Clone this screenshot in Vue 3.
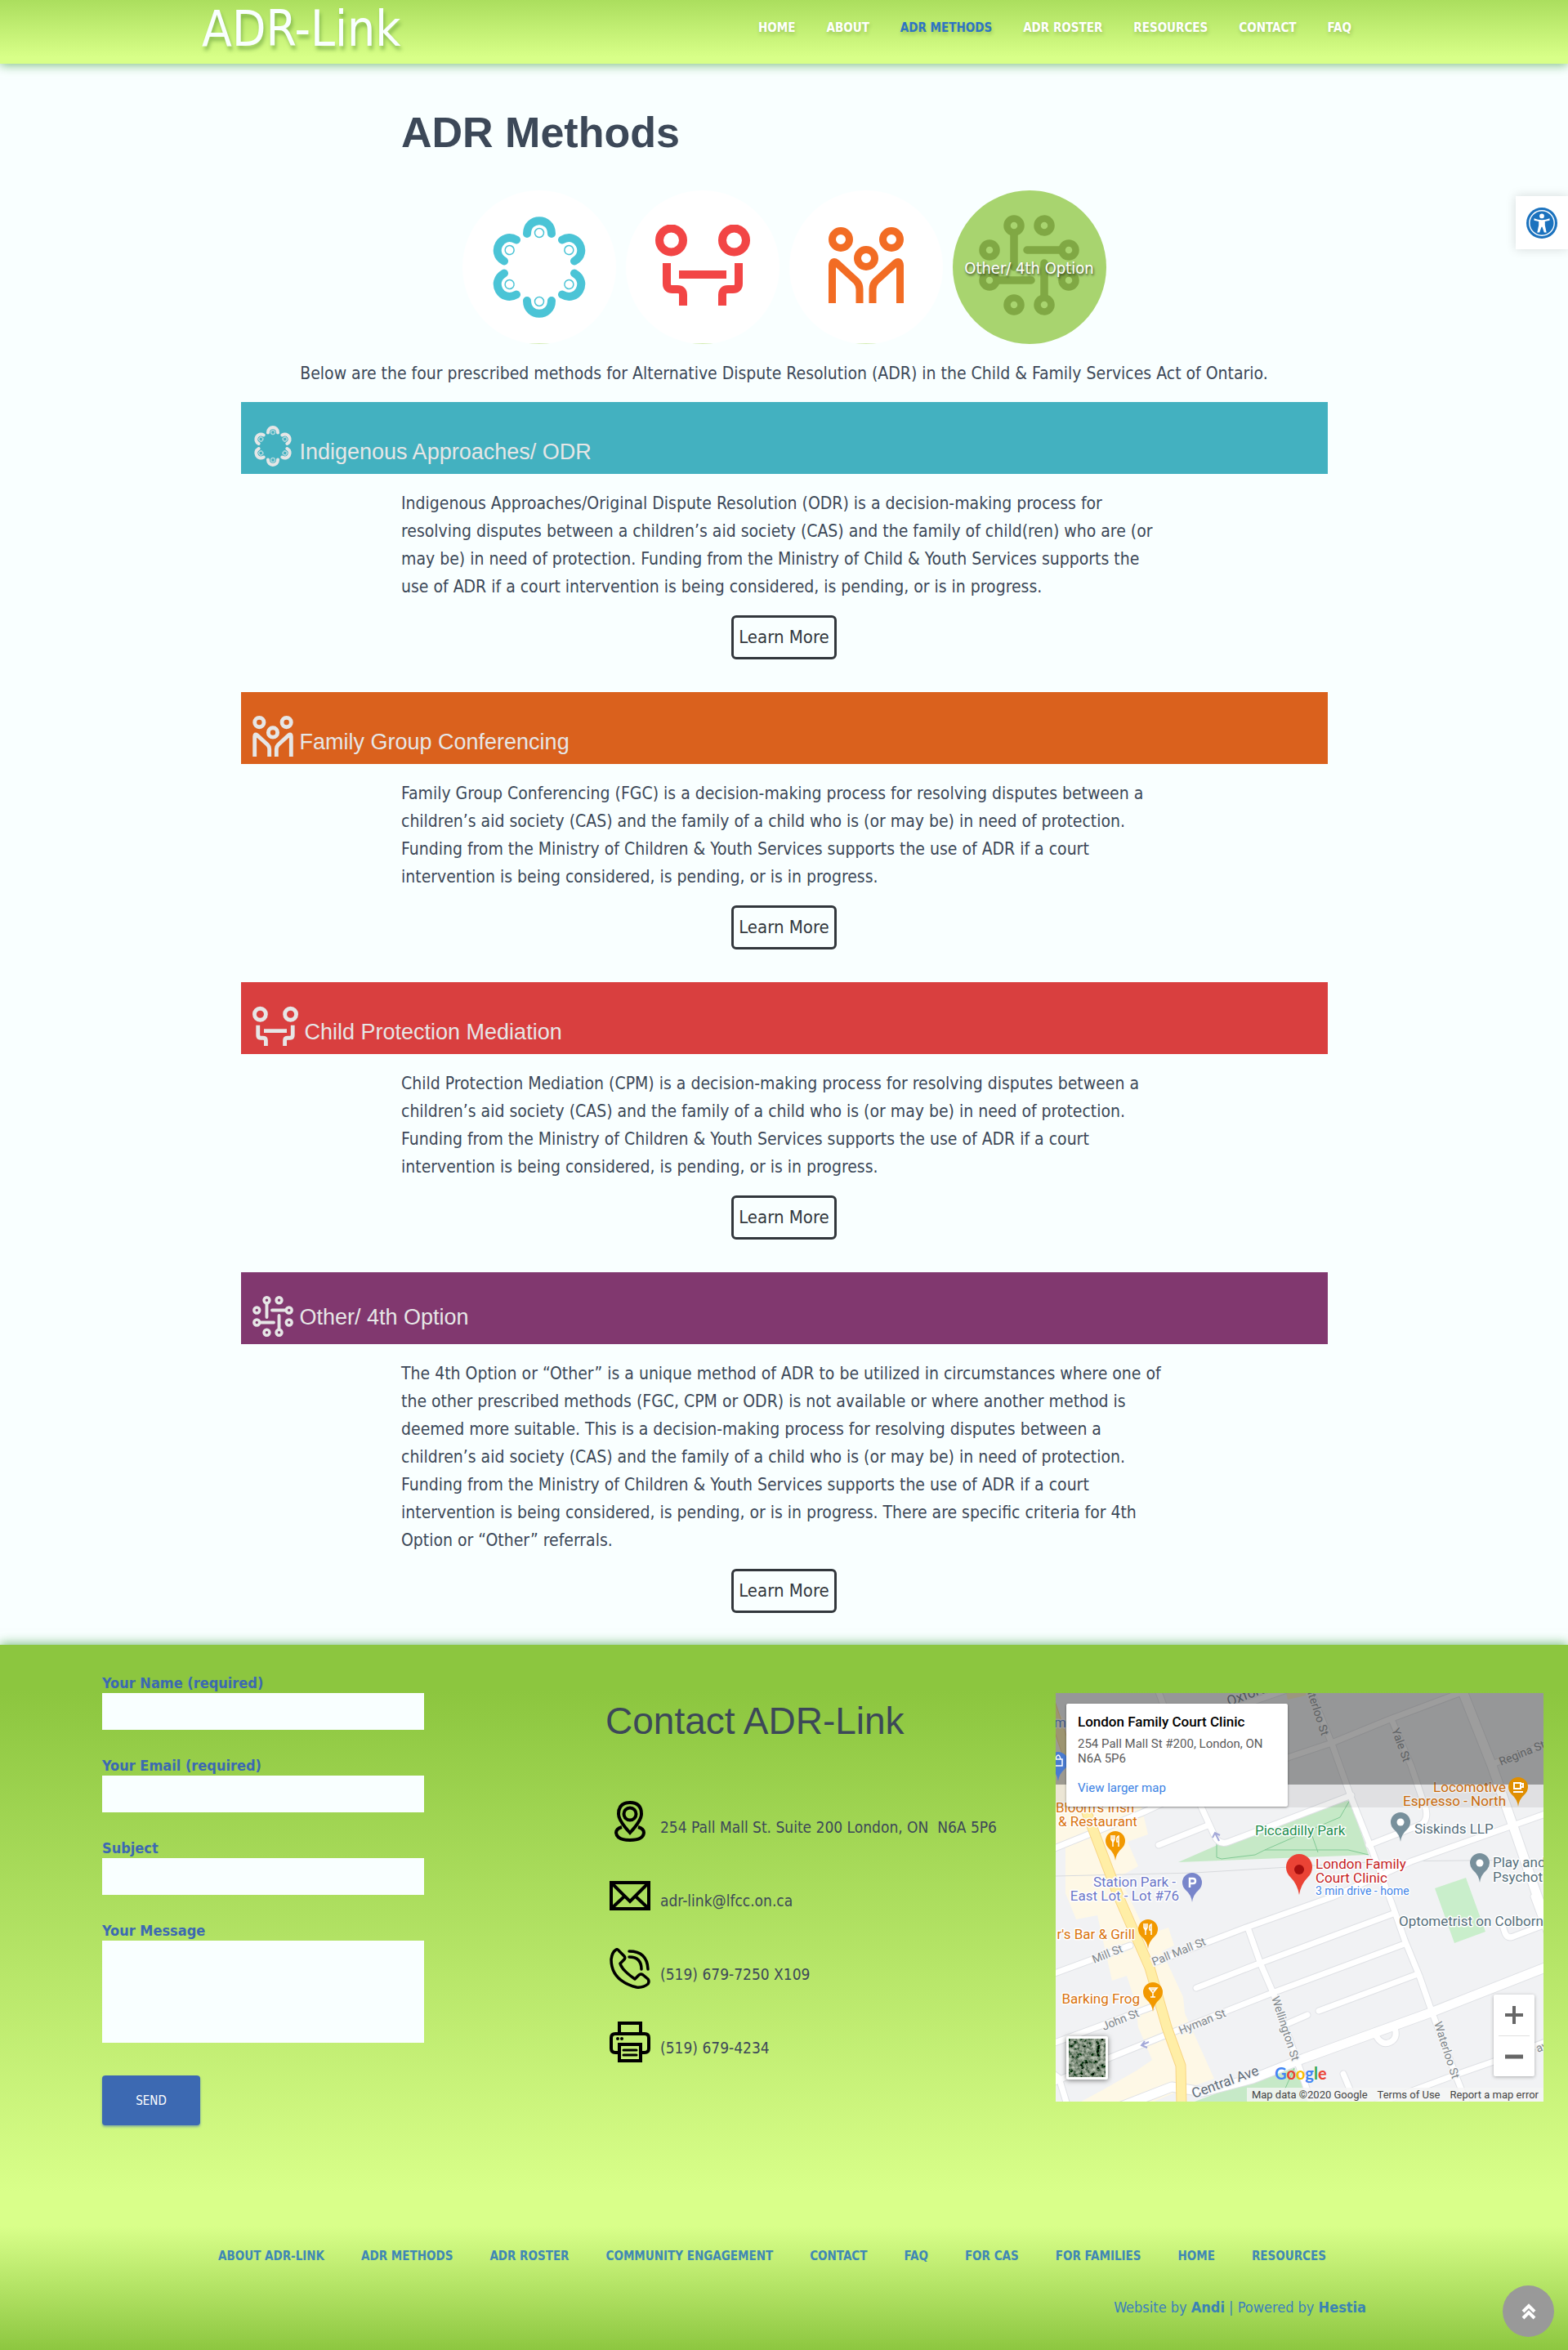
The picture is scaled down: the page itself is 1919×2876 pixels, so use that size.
<script setup>
import { ref } from 'vue'

const nav = ['Home', 'About', 'ADR Methods', 'ADR Roster', 'Resources', 'Contact', 'FAQ']

const circles = [
  { id: 'odr', label: 'Indigenous Approaches/ ODR', color: '#4bc4d6', w: 114, h: 124 },
  { id: 'cpm', label: 'Child Protection Mediation', color: '#f24545', w: 116, h: 99 },
  { id: 'fgc', label: 'Family Group Conferencing', color: '#f26c24', w: 92, h: 93 },
  { id: 'other', label: 'Other/ 4th Option', color: '#80a844', w: 123, h: 123, active: true }
]

const sections = [
  {
    id: 'odr',
    title: 'Indigenous Approaches/ ODR',
    width: 50,
    text: 'Indigenous Approaches/Original Dispute Resolution (ODR) is a decision-making process for resolving disputes between a children’s aid society (CAS) and the family of child(ren) who are (or may be) in need of protection. Funding from the Ministry of Child & Youth Services supports the use of ADR if a court intervention is being considered, is pending, or is in progress.'
  },
  {
    id: 'fgc',
    title: 'Family Group Conferencing',
    width: 50,
    text: 'Family Group Conferencing (FGC) is a decision-making process for resolving disputes between a children’s aid society (CAS) and the family of a child who is (or may be) in need of protection. Funding from the Ministry of Children & Youth Services supports the use of ADR if a court intervention is being considered, is pending, or is in progress.'
  },
  {
    id: 'cpm',
    title: 'Child Protection Mediation',
    width: 56,
    text: 'Child Protection Mediation (CPM) is a decision-making process for resolving disputes between a children’s aid society (CAS) and the family of a child who is (or may be) in need of protection. Funding from the Ministry of Children & Youth Services supports the use of ADR if a court intervention is being considered, is pending, or is in progress.'
  },
  {
    id: 'other',
    title: 'Other/ 4th Option',
    width: 50,
    text: 'The 4th Option or “Other” is a unique method of ADR to be utilized in circumstances where one of the other prescribed methods (FGC, CPM or ODR) is not available or where another method is deemed more suitable. This is a decision-making process for resolving disputes between a children’s aid society (CAS) and the family of a child who is (or may be) in need of protection. Funding from the Ministry of Children & Youth Services supports the use of ADR if a court intervention is being considered, is pending, or is in progress. There are specific criteria for 4th Option or “Other” referrals.'
  }
]

const contacts = [
  { id: 'pin', text: '254 Pall Mall St. Suite 200 London, ON\u00a0 N6A 5P6' },
  { id: 'mail', text: 'adr-link@lfcc.on.ca' },
  { id: 'phone', text: '(519) 679-7250 X109' },
  { id: 'printer', text: '(519) 679-4234' }
]

const footerNav = ['About ADR-Link', 'ADR Methods', 'ADR Roster', 'Community Engagement', 'Contact', 'FAQ', 'For CAS', 'For Families', 'Home', 'Resources']

const form = ref({ name: '', email: '', subject: '', message: '' })

const roads = [
  'M312 -2L338 62L362 129L387 192L413 262L427 302L445 346L460 389L490 469L504 504',
  'M200 115L284 79L338 61L409 32L505 -4',
  'M411 32L435 89L453 142Q456 156 447 161L383 186',
  'M602 147L435 206L340 249L233 287L115 332',
  'M172 361L249 331L413 270',
  'M427 307L265 367L146 414L67 446L-6 478',
  'M322 389L443 344',
  'M235 287L251 332L267 369L294 446L314 504',
  'M285 404L308 394',
  'M602 426L536 451L490 467L390 504',
  'M352 466L368 504',
  'M-4 344L91 309',
  'M-4 429L118 384',
  'M-4 191L107 146L150 126',
  'M125 -4L178 139L194 174Q200 187 212 182L273 159L362 125',
  'M126 186L186 162',
  'M545 279L550 294Q553 301 560 298L602 282',
  'M585 249L602 295',
  'M534 87L602 62',
  'M150 42L300 -10',
  'M-4 465L4 471L14 504',
  'M393 421Q400 432 410 427Q419 422 415 410'
]
const wideRoads = [
  'M498 -2L534 89L561 166L585 236L604 290',
  'M604 334L459 391L304 447L241 472L180 488L142 482L80 506'
]

const pins = [
  { x: 73, y: 181, c: '#f29900', g: 'fork' },
  { x: 113, y: 289, c: '#f29900', g: 'fork' },
  { x: 119, y: 366, c: '#f29900', g: 'glass' },
  { x: 566, y: 115, c: '#e08e00', g: 'cup' },
  { x: 422, y: 158, c: '#78909c', g: 'dot' },
  { x: 519, y: 208, c: '#78909c', g: 'dot' },
  { x: 167, y: 232, c: '#7986cb', g: 'park' },
  { x: 3, y: 84, c: '#4a7bd0', g: 'bag' }
]
</script>

<template>
  <svg class="defs" width="0" height="0" aria-hidden="true">
    <symbol id="odr" viewBox="-57 -62 114 124">
      <g v-for="n in 6" :key="n" :transform="`rotate(${n * 60})`">
        <path d="M-15 -41C-15 -62 15 -62 15 -41" fill="none" stroke="currentColor" stroke-width="10" stroke-linecap="round" />
        <circle cx="0" cy="-42" r="7" fill="none" stroke="#fff" stroke-opacity=".6" stroke-width="2" />
        <circle cx="0" cy="-42" r="5.500" fill="none" stroke="currentColor" stroke-width="1.500" />
      </g>
    </symbol>
    <symbol id="cpm" viewBox="0 0 116 99">
      <g fill="none" stroke="currentColor" stroke-width="10">
        <circle cx="19.500" cy="19" r="14.500" />
        <circle cx="96.500" cy="19" r="14.500" />
        <path d="M14 47V72Q14 79 21 79H27Q34 79 34 86V99M102 47V72Q102 79 95 79H89Q82 79 82 86V99M29 61H87" />
      </g>
    </symbol>
    <symbol id="fgc" viewBox="0 0 92 93">
      <g fill="none" stroke="currentColor" stroke-width="9">
        <circle cx="15" cy="15" r="10.500" />
        <circle cx="77" cy="15" r="10.500" />
        <circle cx="46" cy="38" r="10.500" />
        <path d="M4.500 93V47Q5 40 10 44L34 66Q38 70 38 76V93M87.500 93V47Q87 40 82 44L58 66Q54 70 54 76V93" />
      </g>
    </symbol>
    <symbol id="other" viewBox="0 0 123 123">
      <g fill="none" stroke="currentColor" stroke-width="8.500">
        <circle v-for="p in [[43,13],[80,13],[13,43],[110,43],[13,80],[110,80],[43,110],[80,110]]" :key="p.join()" :cx="p[0]" :cy="p[1]" r="8.500" />
        <path d="M43 24V64M100 43H59M23 80H64M80 100V59" stroke-width="9.500" stroke-linecap="round" />
      </g>
    </symbol>
    <symbol id="pin" viewBox="0 0 50 50">
      <g fill="none" stroke="currentColor" stroke-width="4">
        <path d="M25 39Q11 24 11 16Q11 2 25 2Q39 2 39 16Q39 24 25 39Z" />
        <circle cx="25" cy="16" r="7.500" />
        <path d="M15 32Q8 34 8 39Q9 48 25 48Q41 48 42 39Q42 34 35 32" />
      </g>
    </symbol>
    <symbol id="mail" viewBox="0 0 50 50">
      <path d="M2 10H48V42H2ZM3 11L25 33L47 11M3 41L18 27M47 41L32 27" fill="none" stroke="currentColor" stroke-width="4" />
    </symbol>
    <symbol id="phone" viewBox="0 0 50 50">
      <g fill="none" stroke="currentColor" stroke-width="3.500" stroke-linecap="round" stroke-linejoin="round">
        <path d="M8 2Q10 1 12 4L18 10Q20 13 17 15L13 19Q15 27 31 38L36 33Q38 31 41 33L47 38Q49 41 47 44Q41 49 33 48Q2 40 2 14Q3 5 8 2Z" />
        <path d="M24 4Q46 4 47 26M24 11Q39 11 39 26" />
      </g>
    </symbol>
    <symbol id="printer" viewBox="0 0 50 50">
      <g fill="none" stroke="currentColor" stroke-width="4">
        <path d="M12 14V2H38V14M12 38H7Q2 38 2 33V20Q2 15 7 15H43Q48 15 48 20V33Q48 38 43 38H38M12 28H38V48H12Z" />
        <path d="M17 35H33M17 41H33" stroke-width="3" stroke-linecap="round" />
      </g>
      <circle cx="10" cy="21" r="2" fill="currentColor" />
      <circle cx="15" cy="21" r="2" fill="currentColor" />
    </symbol>
  </svg>

  <header class="site-header">
    <div class="container header-row">
      <a class="logo" href="#">ADR-Link</a>
      <nav class="main-nav" aria-label="Main">
        <a v-for="item in nav" :key="item" href="#" :class="{ current: item === 'ADR Methods' }">{{ item }}</a>
      </nav>
    </div>
  </header>

  <main>
    <h1 class="measure">ADR Methods</h1>
    <div class="circles">
      <a v-for="c in circles" :key="c.id" href="#" class="circle" :class="{ active: c.active }" :style="{ color: c.color }" :aria-label="c.label">
        <svg :width="c.w" :height="c.h"><use :href="'#' + c.id" /></svg>
        <span v-if="c.active" class="circle-label">{{ c.label }}</span>
      </a>
    </div>
    <p class="intro">Below are the four prescribed methods for Alternative Dispute Resolution (ADR) in the Child &amp; Family Services Act of Ontario.</p>

    <section v-for="s in sections" :key="s.id" class="method">
      <h2 class="banner" :class="s.id">
        <svg :width="s.width" height="50"><use :href="'#' + s.id" /></svg>
        <span>{{ s.title }}</span>
      </h2>
      <p class="measure">{{ s.text }}</p>
      <a class="learn" href="#">Learn More</a>
    </section>
  </main>

  <footer>
    <div class="footer-main">
      <form @submit.prevent>
        <label for="f-name">Your Name (required)</label>
        <input id="f-name" v-model="form.name" type="text">
        <label for="f-email">Your Email (required)</label>
        <input id="f-email" v-model="form.email" type="email">
        <label for="f-subject">Subject</label>
        <input id="f-subject" v-model="form.subject" type="text">
        <label for="f-message">Your Message</label>
        <textarea id="f-message" v-model="form.message"></textarea>
        <button class="send" type="submit">Send</button>
      </form>

      <div class="contact">
        <h3>Contact ADR-Link</h3>
        <ul>
          <li v-for="c in contacts" :key="c.id">
            <svg width="50" height="50"><use :href="'#' + c.id" /></svg>
            <span>{{ c.text }}</span>
          </li>
        </ul>
      </div>

      <div class="map">
        <svg class="map-art" viewBox="0 0 597 500" preserveAspectRatio="xMidYMid slice">
          <defs>
            <filter id="leaf" x="0" y="0" width="1" height="1">
              <feTurbulence type="fractalNoise" baseFrequency="0.200" numOctaves="3" seed="4" />
              <feColorMatrix values="1.100 0 0 0 -0.340 1.100 0 0 0 -0.280 1.000 0 0 0 -0.300 0 0 0 0 1" />
            </filter>
          </defs>
          <rect width="597" height="500" fill="#f1f2f4" />
          <path d="M0 20L105 139L113 173L88 182L101 212L78 225L112 296L138 287L145 309L130 316L156 372L158 392L194 472L146 489L120 500H31L57 486L99 462L118 449L101 409L98 380L87 346L69 352L51 272L25 277L12 245L12 190L0 190Z" fill="#fef8e6" />
          <path d="M282 0H307L306 3L284 8Z" fill="#fdf0c0" />
          <path d="M360 131L383 198L150 207L246 165Z" fill="#c6e9c7" />
          <path d="M464 239L502 226L526 292L488 306Z" fill="#c9eecb" />
          <path d="M292 459L312 500H170L245 472Z" fill="#c6e9c7" />
          <path d="M360 131L348 152L320 164L256 192L244 198L203 203L197 201V183M256 192L358 192L383 198M314 175L321 195M292 459L280 486" fill="none" stroke="#81c995" stroke-width="1" />
          <path d="M0 224L170 220L400 206L597 204" fill="none" stroke="#d8dadd" stroke-width="1" />
          <g fill="none" stroke-linecap="round" stroke-linejoin="round">
            <path v-for="r in roads" :key="'e' + r" :d="r" stroke="#dfe1e5" stroke-width="9" />
            <path v-for="r in wideRoads" :key="'e' + r" :d="r" stroke="#dfe1e5" stroke-width="13" />
            <path v-for="r in roads" :key="r" :d="r" stroke="#fff" stroke-width="7" />
            <path v-for="r in wideRoads" :key="r" :d="r" stroke="#fff" stroke-width="11" />
            <path d="M-6 14L39 149L77 249L115 336L136 409L153 456L154 504" stroke="#f8d583" stroke-width="13" />
            <path d="M-6 14L39 149L77 249L115 336L136 409L153 456L154 504" stroke="#ffeea6" stroke-width="11" />
          </g>
          <path d="M200 181L195 171M192 177L195 171L201 174M105 431L114 427M109 426L105 431L112 434" fill="none" stroke="#a4a9d8" stroke-width="2" />
          <g class="street">
            <text transform="translate(47 331) rotate(-22)">Mill St</text>
            <text transform="translate(120 334) rotate(-22)">Pall Mall St</text>
            <text transform="translate(59 413) rotate(-22)">John St</text>
            <text transform="translate(153 418) rotate(-22)">Hyman St</text>
            <text transform="translate(264 373) rotate(72)">Wellington St</text>
            <text transform="translate(463 404) rotate(72)">Waterloo St</text>
            <text transform="translate(411 45) rotate(70)">Yale St</text>
            <text transform="translate(303 -16) rotate(72)">Waterloo St</text>
            <text transform="translate(545 89) rotate(-22)">Regina St</text>
            <text transform="translate(590 440) rotate(-22)">avid</text>
            <text class="avenue" transform="translate(169 496) rotate(-20)">Central Ave</text>
            <text class="avenue" transform="translate(212 16) rotate(-20)">Oxford St</text>
          </g>
          <g class="poi">
            <g fill="#d9730d">
              <text x="0" y="146">Bloom's Irish</text><text x="3" y="163">&amp; Restaurant</text>
              <text x="97" y="301" text-anchor="end">r's Bar &amp; Grill</text><text x="103" y="380" text-anchor="end">Barking Frog</text>
              <text x="551" y="121" text-anchor="end">Locomotive</text><text x="551" y="138" text-anchor="end">Espresso - North</text>
            </g>
            <g fill="#546e7a">
              <text x="439" y="172">Siskinds LLP</text><text x="535" y="213">Play and</text><text x="535" y="231">Psychotherapy</text><text x="420" y="285">Optometrist on Colborne</text>
            </g>
            <g fill="#6b76c8"><text x="147" y="237" text-anchor="end">Station Park -</text><text x="151" y="254" text-anchor="end">East Lot - Lot #76</text></g>
            <text x="244" y="174" fill="#1e8e4e">Piccadilly Park</text>
            <g fill="#c5221f"><text x="318" y="215">London Family</text><text x="318" y="232">Court Clinic</text></g>
            <text class="drive" x="318" y="247" fill="#4285e8">3 min drive - home</text>
            <text x="-2" y="42" fill="#4a7bd0">m</text>
          </g>
          <rect width="597" height="112" fill="#3c3c3c" fill-opacity=".5" />
          <rect y="112" width="597" height="28" fill="#000" fill-opacity=".07" />
          <g v-for="p in pins" :key="p.x + '-' + p.y" :transform="`translate(${p.x} ${p.y})`">
            <path d="M0 24Q-1 15 -8 9Q-12 5 -12 0A12 12 0 0 1 12 0Q12 5 8 9Q1 15 0 24Z" :fill="p.c" />
            <circle v-if="p.g === 'dot'" r="4.500" fill="#fff" />
            <path v-else-if="p.g === 'fork'" d="M-5 -7V-2Q-3 1 -3 2V7M-3 -7V0M-1 -7V-2L-3 2M4 7V-6Q1 -5 2 1H4" fill="none" stroke="#fff" stroke-width="1.500" />
            <path v-else-if="p.g === 'glass'" d="M-5 -5H5L0 1V6M-5 -5L0 1M-3 6H3M-3 -3H3" fill="none" stroke="#fff" stroke-width="1.500" />
            <path v-else-if="p.g === 'cup'" d="M-5 -5H3V2H-5ZM3 -4H6V0H3M-6 6H6" fill="none" stroke="#fff" stroke-width="2" />
            <path v-else-if="p.g === 'park'" d="M-3 6V-5H1Q4 -5 4 -2Q4 1 1 1H-3" fill="none" stroke="#fff" stroke-width="2.500" />
            <path v-else d="M-5 -3H5V5H-5ZM-3 -3Q-2 -8 0 -8Q2 -8 3 -3" fill="none" stroke="#fff" stroke-width="1.500" />
          </g>
          <path d="M298 247Q296 234 287 225Q282 220 282 213A16 16 0 0 1 314 213Q314 220 309 225Q300 234 298 247Z" fill="#ea4335" />
          <circle cx="298" cy="216" r="6" fill="#a50e0e" />
          <text class="google" x="268" y="473"><tspan fill="#4285f4">G</tspan><tspan fill="#ea4335">o</tspan><tspan fill="#fbbc05">o</tspan><tspan fill="#4285f4">g</tspan><tspan fill="#34a853">l</tspan><tspan fill="#ea4335">e</tspan></text>
          <rect x="13" y="420" width="51" height="53" rx="2" fill="#fff" class="thumb" />
          <rect x="16" y="423" width="45" height="47" fill="#4c6350" filter="url(#leaf)" />
        </svg>
        <div class="place">
          <strong>London Family Court Clinic</strong>
          <span>254 Pall Mall St #200, London, ON N6A 5P6</span>
          <a href="#">View larger map</a>
        </div>
        <div class="zoom">
          <button type="button" aria-label="Zoom in"><svg width="22" height="22"><path d="M11 0V22M0 11H22" stroke="#666" stroke-width="4" /></svg></button>
          <button type="button" aria-label="Zoom out"><svg width="22" height="22"><path d="M0 11H22" stroke="#666" stroke-width="5" /></svg></button>
        </div>
        <div class="credits"><span>Map data ©2020 Google</span><a href="#">Terms of Use</a><a href="#">Report a map error</a></div>
      </div>
    </div>

    <div class="footer-bottom">
      <div class="container">
        <nav class="footer-nav" aria-label="Footer">
          <a v-for="item in footerNav" :key="item" href="#">{{ item }}</a>
        </nav>
        <p class="credit">Website by <a href="#">Andi</a> | Powered by <a href="#">Hestia</a></p>
      </div>
    </div>
  </footer>

  <button class="access" type="button" aria-label="Accessibility tools">
    <svg width="40" height="40" viewBox="0 0 40 40">
      <circle cx="20" cy="20" r="20" fill="#1b72be" />
      <circle cx="20" cy="20" r="16" fill="none" stroke="#fff" stroke-width="1.500" />
      <circle cx="20" cy="11" r="3" fill="#fff" />
      <path d="M10 14Q20 18 30 14L30 16.500L24 18V23L26 32H23L20.500 25H19.500L17 32H14L16 23V18L10 16.500Z" fill="#fff" />
    </svg>
  </button>
  <button class="to-top" type="button" aria-label="Back to top">
    <svg width="18" height="20" viewBox="0 0 18 20"><path d="M2 10L9 3L16 10M2 18L9 11L16 18" fill="none" stroke="#fff" stroke-width="4" /></svg>
  </button>
</template>

<style>
body {
  margin: 0;
  background: #f9ffff;
}
#app {
  position: relative;
  overflow: hidden;
}
</style>

<style scoped>
* {
  box-sizing: border-box;
}
.defs {
  position: absolute;
}
header, main, footer, button, input, textarea {
  font-family: Tahoma, "DejaVu Sans Condensed", sans-serif;
}
a {
  text-decoration: none;
  color: inherit;
}
h1, h2, h3, p, ul {
  margin: 0;
  padding: 0;
}
.container {
  width: 100%;
  max-width: 1425px;
  margin: 0 auto;
}

/* header */
.site-header {
  position: relative;
  background: linear-gradient(#abde5e, #d8ff88 90%);
  box-shadow: 0 2px 12px rgba(50, 150, 50, .6);
}
.header-row {
  display: flex;
  justify-content: space-between;
  height: 78px;
}
.logo {
  color: #f9ffff;
  font-size: 60px;
  line-height: 70px;
  text-shadow: 2px 5px 4px rgba(70, 130, 40, .45);
}
.main-nav {
  display: flex;
  gap: 38px;
  padding-right: 18px;
  color: #fff;
  font-size: 15px;
  font-weight: 700;
  line-height: 68px;
  text-transform: uppercase;
  text-shadow: 1px 3px 4px rgba(70, 110, 40, .3);
}
.main-nav .current {
  color: #2e74c4;
}

/* page */
main {
  padding: 54px 24px 39px;
  color: #3c4858;
  font-size: 21px;
  line-height: 34px;
}
.measure {
  max-width: 937px;
  margin: 0 auto;
}
h1 {
  font-family: "Liberation Sans", Arial, sans-serif;
  font-size: 52px;
  line-height: 60px;
}
.circles {
  display: flex;
  flex-wrap: wrap;
  justify-content: center;
  gap: 12px;
  margin: 41px 0 19px;
}
.circle {
  position: relative;
  display: flex;
  align-items: center;
  justify-content: center;
  width: 188px;
  height: 188px;
  border-radius: 50%;
  background: linear-gradient(#fff 187px, #d2ecb0 187px);
}
.circle + .circle {
  padding-bottom: 5px;
}
.circle.active {
  background: #a8d46f;
}
.circle-label {
  position: absolute;
  inset: 0;
  color: #fff;
  font-size: 20px;
  line-height: 190px;
  text-align: center;
  text-shadow: 1px 2px 3px rgba(0, 0, 0, .7);
}
.intro {
  text-align: center;
}
.method {
  max-width: 1330px;
  margin: 18px auto 0;
  text-align: center;
}
.method + .method {
  margin-top: 40px;
}
.method p {
  margin: 19px auto 18px;
  text-align: left;
}
.banner {
  display: flex;
  align-items: flex-end;
  gap: 8px;
  height: 88px;
  padding: 0 14px 9px;
  color: #e6e6e6;
  font-family: "Liberation Sans Narrow", "Liberation Sans", sans-serif;
  font-size: 27px;
  font-weight: 400;
  line-height: 36px;
}
.banner.odr { background: #43b1c0; }
.banner.fgc { background: #da611d; }
.banner.cpm { background: #d93f3f; }
.banner.other { background: #81386f; }
.banner.other span {
  line-height: 48px;
}
.learn {
  display: inline-block;
  height: 54px;
  padding: 0 6px;
  border: 3px solid #32373c;
  border-radius: 6px;
  color: #32373c;
  font-size: 22px;
  line-height: 48px;
  vertical-align: top;
}

/* footer */
footer {
  position: relative;
}
.footer-main {
  display: grid;
  grid-template-columns: 616fr 551fr 597fr;
  padding: 35px 30px 110px 125px;
  background: linear-gradient(#8cc63f 8%, #d9ff8a 96%);
  box-shadow: 0 -2px 12px rgba(50, 150, 50, .6);
}
form {
  display: flex;
  flex-direction: column;
  max-width: 394px;
}
label {
  color: #3c69b2;
  font-size: 18px;
  font-weight: 700;
  line-height: 24px;
}
input, textarea {
  width: 100%;
  height: 45px;
  margin: 0 0 32px;
  padding: 8px;
  border: 0;
  border-radius: 0;
  background: #f9ffff;
  color: #3c4858;
  font-size: 18px;
}
textarea {
  height: 125px;
  margin-bottom: 40px;
  resize: none;
}
.send {
  width: 120px;
  height: 61px;
  border: 0;
  border-radius: 4px;
  background: #3c69b2;
  color: #fff;
  font-size: 15px;
  text-transform: uppercase;
  box-shadow: 0 2px 3px rgba(60, 105, 178, .5);
}
.contact {
  color: #3c4858;
}
.contact h3 {
  padding-top: 32px;
  font-family: "Liberation Sans", Arial, sans-serif;
  font-size: 46px;
  font-weight: 400;
  line-height: 52px;
}
.contact ul {
  display: grid;
  gap: 40px;
  margin-top: 72px;
  padding-left: 5px;
  list-style: none;
}
.contact li {
  display: flex;
  gap: 12px;
  height: 50px;
  font-size: 19px;
  line-height: 64px;
  white-space: nowrap;
}
.contact li svg {
  flex: none;
  color: #000;
}

/* map */
.map {
  position: relative;
  height: 500px;
  margin-top: 24px;
  overflow: hidden;
  font-family: Roboto, sans-serif;
}
.map-art {
  display: block;
  width: 100%;
  height: 100%;
}
.poi text, .street text {
  paint-order: stroke;
  stroke: #fff;
  stroke-width: 3px;
  stroke-linejoin: round;
  font-size: 17px;
}
.poi .drive {
  font-size: 14px;
}
.street text {
  fill: #80868b;
  stroke: #f6f7f8;
  font-size: 14px;
}
.street .avenue {
  fill: #5f6b78;
  font-size: 17px;
}
.google {
  font-family: Lato, Roboto, sans-serif;
  font-size: 20px;
  font-weight: 700;
}
.thumb {
  filter: drop-shadow(0 1px 3px rgba(0, 0, 0, .5));
}
.place {
  position: absolute;
  top: 13px;
  left: 13px;
  display: flex;
  flex-direction: column;
  width: 271px;
  height: 126px;
  padding: 12px 14px;
  border-radius: 2px;
  background: #fff;
  box-shadow: 0 1px 3px rgba(0, 0, 0, .4);
  color: #5b5b5b;
  font-size: 15px;
  line-height: 18px;
}
.place strong {
  margin-bottom: 8px;
  color: #000;
  font-size: 17px;
  font-weight: 500;
  line-height: 20px;
}
.place a {
  margin-top: 18px;
  color: #3b82e4;
}
.zoom {
  position: absolute;
  top: 369px;
  right: 11px;
  width: 50px;
  border-radius: 2px;
  background: #fff;
  box-shadow: 0 1px 4px rgba(0, 0, 0, .3);
}
.zoom button {
  display: flex;
  align-items: center;
  justify-content: center;
  width: 38px;
  height: 50px;
  margin: 0 auto;
  padding: 0;
  border: 0;
  background: none;
}
.zoom button + button {
  border-top: 1px solid #e0e0e0;
}
.credits {
  position: absolute;
  right: 0;
  bottom: 0;
  display: flex;
  gap: 12px;
  height: 17px;
  padding: 0 6px;
  background: rgba(245, 245, 245, .8);
  color: #444;
  font-size: 13px;
  line-height: 17px;
  white-space: nowrap;
}

/* bottom strip */
.footer-bottom {
  height: 167px;
  padding-top: 34px;
  background: linear-gradient(#d9ff8a 8%, #8cc63f);
  color: #3a7fbd;
}
.footer-nav {
  display: flex;
  gap: 45px;
  padding-left: 20px;
  color: #3f87b5;
  font-size: 15px;
  font-weight: 700;
  line-height: 32px;
  text-transform: uppercase;
  white-space: nowrap;
}
.credit {
  margin-top: 31px;
  font-size: 18px;
  line-height: 32px;
  text-align: right;
}
.credit a {
  color: #3a83b4;
  font-weight: 700;
}
.access {
  position: absolute;
  top: 240px;
  right: 0;
  display: flex;
  align-items: center;
  width: 64px;
  height: 65px;
  padding: 0 13px;
  border: 0;
  background: #fff;
  box-shadow: 0 0 12px rgba(0, 0, 0, .15);
}
.to-top {
  position: absolute;
  right: 17px;
  bottom: 18px;
  display: flex;
  align-items: center;
  justify-content: center;
  width: 63px;
  height: 63px;
  padding: 0;
  border: 0;
  border-radius: 50%;
  background: #999;
}
</style>
